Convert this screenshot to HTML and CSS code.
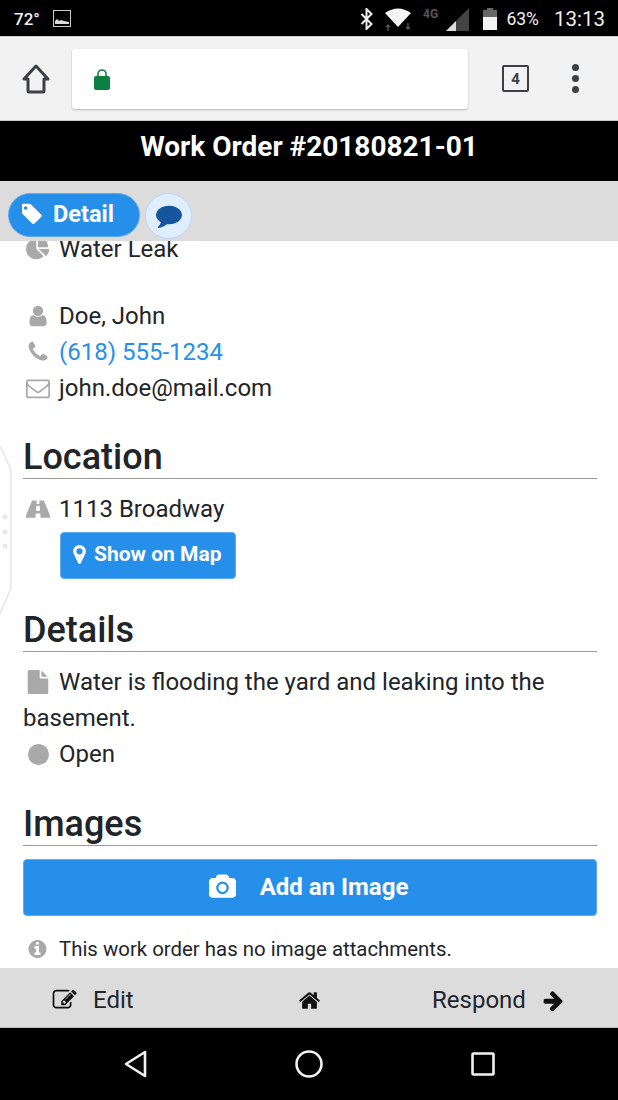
FILE: index.html
```html
<!DOCTYPE html>
<html lang="en">
<head>
    <meta charset="UTF-8">
    <meta name="viewport" content="width=device-width, initial-scale=1.0">
    <title>Work Order</title>
    <link rel="stylesheet" href="styles.css">
</head>
<body>
<div class="phone">
    <!-- android status bar -->
    <div class="status-bar">
        <span class="temp">72°</span>
        <svg class="st-image" viewBox="0 0 18 17"><rect x="0.5" y="0.5" width="17" height="16" fill="none" stroke="#ccc"/><path d="M2 14v-3l2-2 2 2 2-1 3 1 5 1v2z" fill="#ddd"/></svg>
        <span class="status-right">
            <svg class="st-bt" viewBox="0 0 13 22"><path d="M1.500 6l10 10-5 5V1l5 5-10 10" fill="none" stroke="#eee" stroke-width="2"/></svg>
            <svg class="st-wifi" viewBox="0 0 26 24"><path d="M0 6Q13-3 26 6L13 20z" fill="#f4f4f4"/><path d="M3 24v-6M1 20l2-2 2 2M23 16v6M21 20l2 2 2-2" stroke="#555" stroke-width="1.400" fill="none"/></svg>
            <svg class="st-signal" viewBox="0 0 46 24"><path d="M23 24L46 1v23z" fill="#444"/><path d="M23 24l10-10v10z" fill="#ddd"/><text x="0" y="11" class="st-4g">4G</text></svg>
            <svg class="st-batt" viewBox="0 0 14 22"><path d="M4 0h6v2h4v20H0V2h4z" fill="#666"/><rect y="9" width="14" height="13" fill="#f2f2f2"/></svg>
            <span class="batt-text">63%</span>
            <span class="clock">13:13</span>
        </span>
    </div>

    <!-- browser toolbar -->
    <div class="browser-bar">
        <svg class="br-home" viewBox="0 0 28 30"><path d="M14 2L2 15h4v12a1 1 0 0 0 1 1h14a1 1 0 0 0 1-1V15h4z" fill="none" stroke="#3c4043" stroke-width="3" stroke-linejoin="round"/></svg>
        <div class="url-box">
            <svg class="lock" viewBox="0 0 16 22"><path d="M4 9V6a4 4 0 0 1 8 0v3" fill="none" stroke="#0b8043" stroke-width="1.600"/><rect y="8" width="16" height="14" rx="2" fill="#0b8043"/></svg>
        </div>
        <span class="tab-count">4</span>
        <span class="menu-dots"><i></i><i></i><i></i></span>
    </div>

    <div class="title-bar">Work Order #20180821-01</div>

    <div class="tabs">
        <div class="tab-detail">
            <svg class="ic-tag" viewBox="0 0 1536 1792"><path d="M384 448q0-53-37.500-90.500t-90.500-37.500-90.500 37.500-37.500 90.500 37.500 90.500 90.500 37.500 90.500-37.500 37.500-90.500zm1067 576q0 53-37 90l-491 492q-39 37-91 37-53 0-90-37l-715-716q-38-37-64.500-101t-26.500-117v-416q0-52 38-90t90-38h416q53 0 117 26.500t102 64.500l715 714q37 39 37 91z"/></svg>
            Detail
        </div>
        <div class="tab-chat">
            <svg class="ic-chat" viewBox="0 0 1792 1792"><path d="M1792 896q0 174-120 321.500t-326 233-450 85.500q-70 0-145-8-198 175-460 242-49 14-114 22-17 2-30.500-9t-17.500-29v-1q-3-4-.5-12t2-10 4.500-9.500l6-9 7-8.500 8-9q7-8 31-34.500t34.500-38 31-39.500 32.500-51 27-59 26-76q-157-89-247.500-220t-90.500-281q0-130 71-248.500t191-204.500 286-136.500 348-50.500q244 0 450 85.500t326 233 120 321.500z"/></svg>
        </div>
    </div>

    <div class="content">
        <div class="inner">
            <div class="row row-blank-after">
                <svg class="ic" viewBox="0 0 1792 1792"><path d="M768 890l546 546q-106 108-247.500 168t-298.500 60q-209 0-385.500-103t-279.500-279.500-103-385.500 103-385.500 279.500-279.500 385.500-103v762zm187 6h773q0 157-60 298.500t-168 247.500zm709-128h-768v-768q209 0 385.500 103t279.500 279.500 103 385.500z"/></svg>
                Water Leak
            </div>
            <div class="row">
                <svg class="ic" viewBox="0 0 1792 1792"><path d="M1536 1399q0 109-62.500 187t-150.500 78h-854q-88 0-150.500-78t-62.500-187q0-85 8.500-160.500t31.500-152 58.500-131 94-89 134.500-34.500q131 128 313 128t313-128q76 0 134.500 34.500t94 89 58.500 131 31.500 152 8.500 160.500zm-256-887q0 159-112.500 271.500t-271.500 112.500-271.500-112.500-112.500-271.500 112.500-271.500 271.500-112.500 271.500 112.500 112.500 271.500z"/></svg>
                Doe, John
            </div>
            <div class="row">
                <svg class="ic" viewBox="0 0 1792 1792"><path d="M1600 1240q0 27-10 70.500t-21 68.500q-21 50-122 106-94 51-186 51-27 0-53-3.500t-57.500-12.500-47-14.500-55.500-20.500-49-18q-98-35-175-83-127-79-264-216t-216-264q-48-77-83-175-3-9-18-49t-20.500-55.500-14.500-47-12.500-57.500-3.500-53q0-92 51-186 56-101 106-122 25-11 68.500-21t70.500-10q14 0 21 3 18 6 53 76 11 19 30 54t35 63.500 31 53.500q3 4 17.500 25t21.500 35.500 7 28.500q0 20-28.500 50t-62 55-62 53-28.500 46q0 9 5 22.500t8.500 20.500 14 24 11.500 19q76 137 174 235t235 174q2 1 19 11.500t24 14 20.500 8.500 22.500 5q18 0 46-28.500t53-62 55-62 50-28.500q14 0 28.500 7t35.500 21.500 25 17.500q25 15 53.500 31t63.500 35 54 30q70 35 76 53 3 7 3 21z"/></svg>
                <a class="link" href="#">(618) 555-1234</a>
            </div>
            <div class="row">
                <svg class="ic" viewBox="0 0 1792 1792"><path d="M1664 1504v-768q-32 36-69 66-268 206-426 338-51 43-83 67t-86.500 48.500-102.500 24.500h-2q-48 0-102.500-24.500t-86.500-48.500-83-67q-158-132-426-338-37-30-69-66v768q0 13 9.500 22.500t22.500 9.500h1472q13 0 22.500-9.500t9.500-22.500zm0-1051v-24.500l-.5-13-3-12.500-5.500-9-9-7.500-14-2.500h-1472q-13 0-22.500 9.500t-9.500 22.500q0 168 147 284 193 152 401 317 6 5 35 29.500t46 37.500 44.500 31.500 50.500 27.500 43 9h2q20 0 43-9t50.500-27.500 44.500-31.500 46-37.500 35-29.500q208-165 401-317 54-43 100.500-115.500t46.500-131.500zm128-37v1088q0 66-47 113t-113 47h-1472q-66 0-113-47t-47-113v-1088q0-66 47-113t113-47h1472q66 0 113 47t47 113z"/></svg>
                john.doe@mail.com
            </div>

            <h2 class="heading heading-first">Location</h2>
            <div class="row">
                <svg class="ic" viewBox="0 0 1920 1792"><path d="M1111 1003v-4l-24-320q-1-13-11-22.500t-23-9.500h-186q-13 0-23 9.500t-11 22.500l-24 320v4q-1 12 8 20t21 8h244q12 0 21-8t8-20zm759 467q0 73-46 73h-704q13 0 22-9.500t8-22.500l-20-256q-1-13-11-22.500t-23-9.500h-272q-13 0-23 9.500t-11 22.500l-20 256q-1 13 8 22.500t22 9.500h-704q-46 0-46-73 0-54 26-116l417-1044q8-19 26-33t38-14h339q-13 0-23 9.500t-11 22.500l-15 192q-1 14 8 23t22 9h166q13 0 22-9t8-23l-15-192q-1-13-11-22.500t-23-9.500h339q20 0 38 14t26 33l417 1044q26 62 26 116z"/></svg>
                1113 Broadway
            </div>
            <a class="btn btn-map" href="#">
                <svg class="ic-marker" viewBox="384 128 1024 1536"><path d="M1152 640q0-106-75-181t-181-75-181 75-75 181 75 181 181 75 181-75 75-181zm256 0q0 109-33 179l-364 774q-16 33-47.500 52t-67.500 19-67.500-19-46.500-52l-365-774q-33-70-33-179 0-212 150-362t362-150 362 150 150 362z"/></svg>
                Show on Map
            </a>

            <h2 class="heading heading-details">Details</h2>
            <div class="para">
                <svg class="ic ic-inline" viewBox="0 0 1792 1792"><path d="M1152 512v-472q22 14 36 28l408 408q14 14 28 36h-472zm-128 32q0 40 28 68t68 28h544v1056q0 40-28 68t-68 28h-1344q-40 0-68-28t-28-68v-1600q0-40 28-68t68-28h800v544z"/></svg>Water is flooding the yard and leaking into the basement.
            </div>
            <div class="row">
                <span class="dot"></span>
                Open
            </div>

            <h2 class="heading heading-images">Images</h2>
            <a class="btn btn-add" href="#">
                <svg class="ic-camera" viewBox="-64 0 1920 1792"><path d="M896 672q119 0 203.500 84.500t84.500 203.500-84.500 203.500-203.500 84.500-203.500-84.500-84.500-203.500 84.500-203.500 203.500-84.500zm704-416q106 0 181 75t75 181v896q0 106-75 181t-181 75h-1408q-106 0-181-75t-75-181v-896q0-106 75-181t181-75h224l51-136q19-49 69.500-84.500t103.500-35.500h512q53 0 103.500 35.500t69.500 84.500l51 136h224zm-704 1152q185 0 316.500-131.500t131.500-316.500-131.500-316.500-316.500-131.500-316.500 131.500-131.500 316.500 131.500 316.500 316.500 131.500z"/></svg>
                Add an Image
            </a>
            <div class="note">
                <svg class="ic-info" viewBox="0 0 1792 1792"><path d="M1152 1376v-160q0-14-9-23t-23-9h-96v-512q0-14-9-23t-23-9h-320q-14 0-23 9t-9 23v160q0 14 9 23t23 9h96v320h-96q-14 0-23 9t-9 23v160q0 14 9 23t23 9h448q14 0 23-9t9-23zm-128-896v-160q0-14-9-23t-23-9h-192q-14 0-23 9t-9 23v160q0 14 9 23t23 9h192q14 0 23-9t9-23zm640 416q0 209-103 385.500t-279.500 279.500-385.500 103-385.500-103-279.500-279.500-103-385.500 103-385.500 279.500-279.500 385.500-103 385.500 103 279.500 279.500 103 385.500z"/></svg>
                This work order has no image attachments.
            </div>
        </div>
        <!-- edge panel handle, sits over the page -->
        <svg class="edge-handle" viewBox="0 0 14 170"><path d="M0 0l11 24v118L0 168" fill="none" stroke="#e6e6e6" stroke-width="1.500"/><circle cx="5" cy="71" r="2.500" fill="#e8e8e8"/><circle cx="5" cy="86" r="2.500" fill="#e8e8e8"/><circle cx="5" cy="100" r="2.500" fill="#e8e8e8"/></svg>
    </div>

    <div class="footer">
        <div class="foot-cell foot-edit">
            <svg class="ic-edit" viewBox="0 0 1920 1792"><path d="M888 1184l116-116-152-152-116 116v56h96v96h56zm440-720q-16-16-33 1l-350 350q-17 17-1 33t33-1l350-350q17-17 1-33zm80 594v190q0 119-84.500 203.500t-203.500 84.500h-832q-119 0-203.500-84.500t-84.500-203.500v-832q0-119 84.500-203.500t203.500-84.500h832q63 0 117 25 15 7 18 23 3 17-9 29l-49 49q-14 14-32 8-23-6-45-6h-832q-66 0-113 47t-47 113v832q0 66 47 113t113 47h832q66 0 113-47t47-113v-126q0-13 9-22l64-64q15-15 35-7t20 29zm-96-738l288 288-672 672h-288v-288zm444 132l-92 92-288-288 92-92q28-28 68-28t68 28l152 152q28 28 28 68t-28 68z"/></svg>
            Edit
        </div>
        <div class="foot-cell foot-home">
            <svg class="ic-home" viewBox="0 0 1792 1792"><path d="M1472 992v480q0 26-19 45t-45 19h-384v-384h-256v384h-384q-26 0-45-19t-19-45v-480q0-1 .5-3t.5-3l575-474 575 474q1 2 1 6zm223-69l-62 74q-8 9-21 11h-3q-13 0-21-7l-692-577-692 577q-12 8-24 7-13-2-21-11l-62-74q-8-10-7-23.500t11-21.500l719-599q32-26 76-26t76 26l244 204v-195q0-14 9-23t23-9h192q14 0 23 9t9 23v408l219 182q10 8 11 21.500t-7 23.500z"/></svg>
        </div>
        <div class="foot-cell foot-respond">
            Respond
            <svg class="ic-arrow" viewBox="0 0 1792 1792"><path d="M1600 960q0 54-37 91l-651 651q-39 37-91 37-51 0-90-37l-75-75q-38-38-38-91t38-91l293-293h-704q-52 0-84.500-37.500t-32.500-90.500v-128q0-53 32.500-90.500t84.500-37.500h704l-293-294q-38-36-38-90t38-90l75-75q38-38 90-38 53 0 91 38l651 651q37 35 37 90z"/></svg>
        </div>
    </div>

    <!-- android nav buttons -->
    <div class="nav-bar">
        <svg class="nav-back" viewBox="0 0 24 28"><path d="M21 2v24L2 14z" fill="none" stroke="#f2f2f2" stroke-width="2.600" stroke-linejoin="round"/></svg>
        <svg class="nav-circle" viewBox="0 0 28 28"><circle cx="14" cy="14" r="12.500" fill="none" stroke="#f2f2f2" stroke-width="2.600"/></svg>
        <svg class="nav-square" viewBox="0 0 24 24"><rect x="1.500" y="1.500" width="21" height="21" rx="1" fill="none" stroke="#f2f2f2" stroke-width="2.600"/></svg>
    </div>
</div>
</body>
</html>
```

FILE: styles.css
```css
body {
    margin: 0;
    font-family: Roboto, "Liberation Sans", sans-serif;
    color: #212529;
    background-color: #fff;
}

a {
    text-decoration: none;
}

.phone {
    display: flex;
    flex-direction: column;
    width: 618px;
    height: 1100px;
    overflow: hidden;
}

/* status bar */
.status-bar {
    display: flex;
    align-items: center;
    flex: none;
    height: 35px;
    padding: 1px 13px 0 14px;
    background-color: #000;
    color: #f0f0f0;
    border-bottom: 1px solid #ccc;
}

.temp {
    font-size: 17px;
    font-weight: 500;
}

.st-image {
    width: 18px;
    height: 17px;
    margin-left: 13px;
}

.status-right {
    display: flex;
    align-items: center;
    margin-left: auto;
}

.st-bt {
    width: 13px;
    height: 22px;
}

.st-wifi {
    width: 26px;
    height: 24px;
    margin-left: 12px;
}

.st-signal {
    width: 46px;
    height: 24px;
    margin-left: 12px;
}

.st-4g {
    font-size: 12px;
    font-weight: 700;
    fill: #555;
}

.st-batt {
    width: 14px;
    height: 22px;
    margin-left: 14px;
}

.batt-text {
    margin-left: 9px;
    font-size: 17.500px;
}

.clock {
    margin-left: 15px;
    font-size: 20.500px;
}

/* browser toolbar */
.browser-bar {
    display: flex;
    align-items: center;
    flex: none;
    height: 83px;
    background-color: #f2f2f2;
    border-bottom: 1px solid #ccc;
}

.br-home {
    width: 28px;
    height: 30px;
    margin-left: 22px;
}

.url-box {
    display: flex;
    align-items: center;
    width: 396px;
    height: 60px;
    margin-left: 22px;
    padding-left: 22px;
    box-sizing: border-box;
    background-color: #fff;
    border-radius: 3px;
    box-shadow: 0 1px 2px rgba(0, 0, 0, 0.25);
}

.lock {
    width: 16px;
    height: 22px;
}

.tab-count {
    display: flex;
    align-items: center;
    justify-content: center;
    width: 27px;
    height: 27px;
    box-sizing: border-box;
    margin-left: 34px;
    border: 2.500px solid #3c4043;
    border-radius: 2px;
    font-size: 15px;
    font-weight: 700;
    color: #3c4043;
}

.menu-dots {
    display: flex;
    flex-direction: column;
    gap: 4px;
    margin-left: 43px;
}

.menu-dots i {
    display: block;
    width: 7px;
    height: 7px;
    border-radius: 50%;
    background-color: #3c4043;
}

/* page header */
.title-bar {
    flex: none;
    height: 60px;
    background-color: #000;
    color: #fff;
    font-size: 28px;
    font-weight: 700;
    line-height: 52px;
    text-align: center;
}

.tabs {
    display: flex;
    flex: none;
    gap: 5px;
    height: 60px;
    padding: 12px 0 0 8px;
    box-sizing: border-box;
    background-color: #dcdcdc;
}

.tab-detail {
    display: flex;
    align-items: center;
    width: 132px;
    height: 44px;
    box-sizing: border-box;
    padding: 0 0 2px 13px;
    background-color: #268fea;
    border: 1px solid #5fabf0;
    border-radius: 22px;
    color: #fff;
    font-size: 23.500px;
    font-weight: 700;
}

.ic-tag {
    width: 21px;
    height: 24px;
    margin-right: 10px;
    fill: #fff;
}

.tab-chat {
    display: flex;
    align-items: center;
    justify-content: center;
    width: 47px;
    height: 46px;
    box-sizing: border-box;
    background-color: #e0efff;
    border: 1.500px solid #bcd8fa;
    border-radius: 50%;
}

.ic-chat {
    width: 26px;
    height: 26px;
    margin-bottom: 2px;
    fill: #17559f;
}

/* main content */
.content {
    position: relative;
    flex: 1;
    overflow: hidden;
}

.inner {
    margin-top: -10px;
    padding: 0 21px 0 23px;
    font-size: 24px;
    line-height: 36px;
}

.row {
    display: flex;
    align-items: center;
    height: 36px;
}

.row-blank-after {
    margin-bottom: 31px;
}

.ic {
    flex: none;
    width: 30px;
    height: 24px;
    margin-right: 6px;
    fill: #a9a9a9;
}

.ic-inline {
    margin-right: 6px;
    vertical-align: -4px;
}

.para {
    line-height: 36px;
}

.dot {
    flex: none;
    width: 21px;
    height: 21px;
    margin: 0 10px 0 5px;
    border-radius: 50%;
    background-color: #a9a9a9;
}

.link {
    color: #268fea;
}

.heading {
    margin: 0;
    padding-bottom: 1px;
    height: 45px;
    border-bottom: 1px solid #999;
    font-size: 36px;
    font-weight: 500;
    line-height: 51px;
}

.heading-first {
    margin-top: 26px;
    margin-bottom: 12px;
}

.heading-details {
    margin-top: 26px;
    margin-bottom: 12px;
}

.heading-images {
    margin-top: 27px;
    margin-bottom: 13px;
}

.btn {
    display: flex;
    align-items: center;
    box-sizing: border-box;
    background-color: #268fea;
    border: 1px solid #5fabf0;
    border-radius: 4px;
    color: #fff;
    font-weight: 500;
}

.btn-map {
    width: 176px;
    height: 47px;
    margin: 5px 0 0 37px;
    padding: 0 0 3px 12px;
    font-size: 21px;
    font-weight: 700;
}

.ic-marker {
    width: 13px;
    height: 19px;
    margin-right: 8px;
    fill: #fff;
}

.btn-add {
    justify-content: center;
    height: 57px;
    padding: 0 3px 2px 0;
    font-weight: 700;
}

.ic-camera {
    width: 27px;
    height: 26px;
    margin-right: 24px;
    fill: #fff;
}

.note {
    display: flex;
    align-items: center;
    margin-top: 15px;
    font-size: 20.400px;
    line-height: 36px;
}

.ic-info {
    width: 21px;
    height: 24px;
    margin: 0 11px 0 4px;
    fill: #a9a9a9;
}

.edge-handle {
    position: absolute;
    top: 205px;
    left: 0;
    width: 14px;
    height: 170px;
}

/* bottom action bar */
.footer {
    display: flex;
    flex: none;
    height: 59px;
    padding-top: 5px;
    box-sizing: border-box;
    background-color: #dcdcdc;
    color: #212529;
    font-size: 24px;
}

.foot-cell {
    display: flex;
    align-items: center;
}

.foot-edit {
    width: 238px;
    padding-left: 52px;
    box-sizing: border-box;
}

.ic-edit {
    width: 27px;
    height: 24px;
    margin-right: 14px;
    fill: #111;
}

.foot-home {
    justify-content: center;
    width: 142px;
}

.ic-home {
    width: 23px;
    height: 23px;
    fill: #111;
}

.foot-respond {
    flex: 1;
    padding-left: 52px;
}

.ic-arrow {
    width: 23px;
    height: 23px;
    margin-left: 16px;
    fill: #111;
}

/* android nav */
.nav-bar {
    display: flex;
    align-items: center;
    flex: none;
    height: 73px;
    background-color: #000;
    border-top: 1px solid #bbb;
    box-sizing: border-box;
}

.nav-back {
    width: 24px;
    height: 28px;
    margin-left: 124px;
}

.nav-circle {
    width: 28px;
    height: 28px;
    margin-left: 147px;
}

.nav-square {
    width: 24px;
    height: 24px;
    margin-left: 148px;
}
```
